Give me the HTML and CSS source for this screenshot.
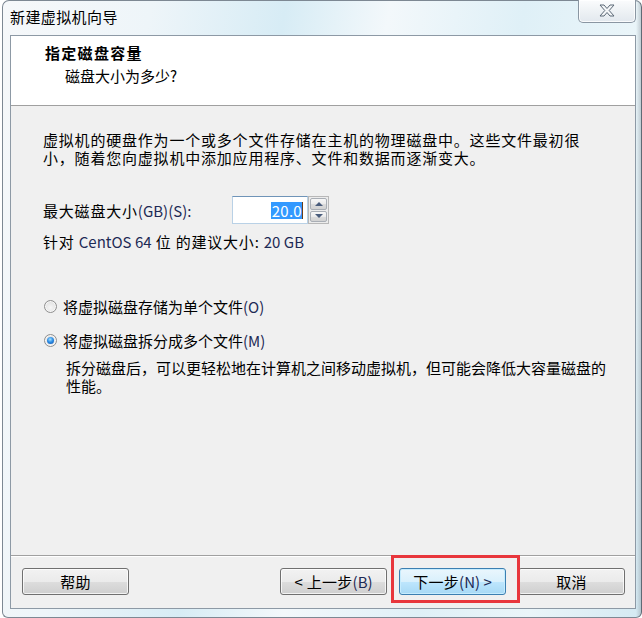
FILE: index.html
```html
<!DOCTYPE html>
<html lang="zh-CN">
<head>
<meta charset="utf-8">
<title>新建虚拟机向导</title>
<link rel="stylesheet" href="styles.css">
</head>
<body>
<div class="window">
  <div class="titlebar">
    <span class="title">新建虚拟机向导</span>
    <div class="close">
      <svg width="16" height="13" viewBox="0 0 16 13">
        <polygon points="1,1 5,1 8,4.5 11,1 15,1 10.2,6.5 15,12 11,12 8,8.5 5,12 1,12 5.8,6.5" fill="#f4f6f8" stroke="#5b6876" stroke-width="1" stroke-linejoin="round"/>
      </svg>
    </div>
  </div>
  <div class="client">
    <div class="header">
      <div class="h-title">指定磁盘容量</div>
      <div class="h-sub">磁盘大小为多少?</div>
    </div>
    <div class="content">
      <p class="intro">虚拟机的硬盘作为一个或多个文件存储在主机的物理磁盘中。这些文件最初很<br>小，随着您向虚拟机中添加应用程序、文件和数据而逐渐变大。</p>
      <div class="size-row">
        <span class="size-label">最大磁盘大小<span class="lat">(GB)(S):</span></span>
        <div class="textbox"><span class="sel">20.0</span><span class="caret"></span></div>
        <div class="spinner">
          <div class="spin-btn"><span class="tri-up"></span></div>
          <div class="spin-btn"><span class="tri-down"></span></div>
        </div>
      </div>
      <p class="hint">针对 <span class="lat">CentOS 64</span> 位 的建议大小: <span class="lat">20 GB</span></p>
      <div class="radio-row first">
        <span class="radio"></span>
        <span>将虚拟磁盘存储为单个文件<span class="lat">(O)</span></span>
      </div>
      <div class="radio-row second">
        <span class="radio checked"></span>
        <span>将虚拟磁盘拆分成多个文件<span class="lat">(M)</span></span>
      </div>
      <p class="desc">拆分磁盘后，可以更轻松地在计算机之间移动虚拟机，但可能会降低大容量磁盘的<br>性能。</p>
    </div>
    <div class="footer">
      <button class="btn">帮助</button>
      <div class="spacer"></div>
      <button class="btn">&lt; 上一步<span class="lat">(B)</span></button>
      <div class="mark">
        <button class="btn default">下一步<span class="lat">(N) &gt;</span></button>
      </div>
      <button class="btn">取消</button>
    </div>
  </div>
</div>
</body>
</html>
```

FILE: styles.css
```css
html, body {
  margin: 0;
  padding: 0;
  background: #ffffff;
}

body {
  width: 642px;
  height: 618px;
  overflow: hidden;
  font-family: "Noto Sans CJK SC", "Noto Sans", sans-serif;
  font-size: 15px;
  color: #000;
}

.window {
  box-sizing: border-box;
  width: 640px;
  height: 618px;
  margin-left: 2px;
  border: 1px solid #7d8893;
  border-right-color: #5f6a75;
  border-radius: 7px 7px 6px 6px;
  background:
    linear-gradient(to left, rgba(120,130,140,0.35) 0, rgba(120,130,140,0) 5px),
    linear-gradient(100deg, #f6f8fa 0%, #eef5f9 20%, #d7ecf5 38%, #f3f8fb 52%, #dff0f7 70%, #eaf5f9 85%, #d4e9f2 100%);
  display: flex;
  flex-direction: column;
}

.titlebar {
  height: 34px;
  flex: 0 0 34px;
  display: flex;
  align-items: flex-start;
  justify-content: space-between;
  padding-left: 7px;
}

.title {
  font-size: 15px;
  letter-spacing: 0.4px;
  line-height: 20px;
  margin-top: 6px;
  color: #000;
}

.close {
  box-sizing: border-box;
  width: 58px;
  height: 23px;
  margin-top: -1px;
  margin-right: 5px;
  border: 1px solid #8a96a2;
  border-top: none;
  border-radius: 0 0 5px 5px;
  background: linear-gradient(to bottom, #fbfcfd 0%, #eef2f5 50%, #e2e8ee 100%);
  box-shadow: inset 0 0 0 1px rgba(255,255,255,0.8);
  display: flex;
  align-items: center;
  justify-content: center;
}

.close svg {
  display: block;
  margin-top: -1px;
}

.client {
  box-sizing: border-box;
  height: 574px;
  margin: 0 5px 0 7px;
  border: 1px solid #8d99a5;
  background: #f0f0f0;
  display: flex;
  flex-direction: column;
}

.header {
  box-sizing: border-box;
  height: 70px;
  flex: 0 0 70px;
  background: #ffffff;
  border-bottom: 1px solid #a0a0a0;
  padding-top: 7px;
}

.h-title {
  font-weight: bold;
  font-size: 15px;
  line-height: 20px;
  letter-spacing: 1.3px;
  padding-left: 34px;
}

.h-sub {
  line-height: 20px;
  margin-top: 3px;
  padding-left: 54px;
  letter-spacing: 0;
}

.content {
  flex: 1;
  padding-left: 32px;
}

.content p {
  margin: 0;
}

.lat {
  color: #1d2a55;
  letter-spacing: 0;
}

.intro {
  line-height: 18px;
  padding-top: 25px;
  letter-spacing: 0.8px;
}

.size-row {
  display: flex;
  align-items: center;
  height: 28px;
  margin-top: 29px;
  letter-spacing: 0.8px;
}

.size-label {
  flex: 0 0 189px;
}

.textbox {
  box-sizing: border-box;
  width: 76px;
  height: 28px;
  background: #fff;
  border: 1px solid #b9d1e6;
  border-top-color: #6f94b8;
  display: flex;
  align-items: center;
  justify-content: flex-end;
  padding-right: 4px;
}

.sel {
  background: #3399ff;
  color: #fff;
  line-height: 17px;
  letter-spacing: 0.3px;
  padding: 0 0 0 1px;
}

.caret {
  display: inline-block;
  width: 1px;
  height: 17px;
  background: #6a3d1a;
}

.spinner {
  box-sizing: border-box;
  width: 21px;
  height: 28px;
  border: 1px solid #b8b8b8;
  background: #ececec;
  display: flex;
  flex-direction: column;
  gap: 1px;
  padding: 1px;
}

.spin-btn {
  flex: 1;
  border: 1px solid #a9aeb5;
  border-radius: 2px;
  background: linear-gradient(to bottom, #f7f7f7 0%, #ebebeb 50%, #dcdcdc 51%, #d2d2d2 100%);
  display: flex;
  align-items: center;
  justify-content: center;
}

.tri-up {
  width: 0;
  height: 0;
  border-left: 4px solid transparent;
  border-right: 4px solid transparent;
  border-bottom: 4px solid #4a5d7c;
}

.tri-down {
  width: 0;
  height: 0;
  border-left: 4px solid transparent;
  border-right: 4px solid transparent;
  border-top: 4px solid #4a5d7c;
}

.hint {
  line-height: 18px;
  margin-top: 9px !important;
  letter-spacing: 0.8px;
}

.radio-row {
  display: flex;
  align-items: center;
  height: 18px;
  gap: 6px;
  margin-left: 1px;
}

.radio-row.first {
  margin-top: 46px;
}

.radio-row.second {
  margin-top: 16px;
}

.radio {
  box-sizing: border-box;
  width: 13px;
  height: 13px;
  border-radius: 50%;
  border: 1px solid #8f8f8f;
  background: radial-gradient(circle at 50% 60%, #f6f6f6 0%, #e6e6e6 55%, #cfcfcf 100%);
  box-shadow: inset 0 0 0 1px #f7f7f7;
  display: flex;
  align-items: center;
  justify-content: center;
}

.radio.checked::after {
  content: "";
  width: 7px;
  height: 7px;
  border-radius: 50%;
  background: radial-gradient(circle at 45% 35%, #a6e3ff 0%, #2f8ee6 45%, #0c4fa8 100%);
}

.desc {
  line-height: 18px;
  margin-top: 10px !important;
  padding-left: 23px;
}

.footer {
  box-sizing: border-box;
  flex: 0 0 53px;
  height: 53px;
  border-top: 1px solid #a0a0a0;
  box-shadow: inset 0 1px 0 #ffffff;
  display: flex;
  align-items: flex-start;
  padding: 12px 10px 0 11px;
}

.spacer {
  flex: 1;
}

.btn {
  box-sizing: border-box;
  width: 107px;
  height: 27px;
  margin: 0;
  padding: 0;
  font-family: inherit;
  font-size: 15px;
  letter-spacing: 0.3px;
  color: #000;
  border: 1px solid #707070;
  border-radius: 3px;
  background: linear-gradient(to bottom, #f2f2f2 0%, #ebebeb 50%, #dddddd 51%, #cfcfcf 100%);
  box-shadow: inset 0 0 0 1px rgba(255,255,255,0.75);
  line-height: 23px;
}

.btn + .mark,
.mark + .btn {
  margin-left: 12px;
}

.btn.default {
  border-color: #3c7fb1;
  background: linear-gradient(to bottom, #eaf6fd 0%, #d9f0fc 50%, #bee6fd 51%, #a7d9f5 100%);
  box-shadow: inset 0 0 0 1px #c6ecfe;
}

.mark {
  position: relative;
}

.mark::after {
  content: "";
  position: absolute;
  left: -8px;
  right: -14px;
  top: -13px;
  bottom: -8px;
  border: 3px solid #e8363c;
  pointer-events: none;
}
```
